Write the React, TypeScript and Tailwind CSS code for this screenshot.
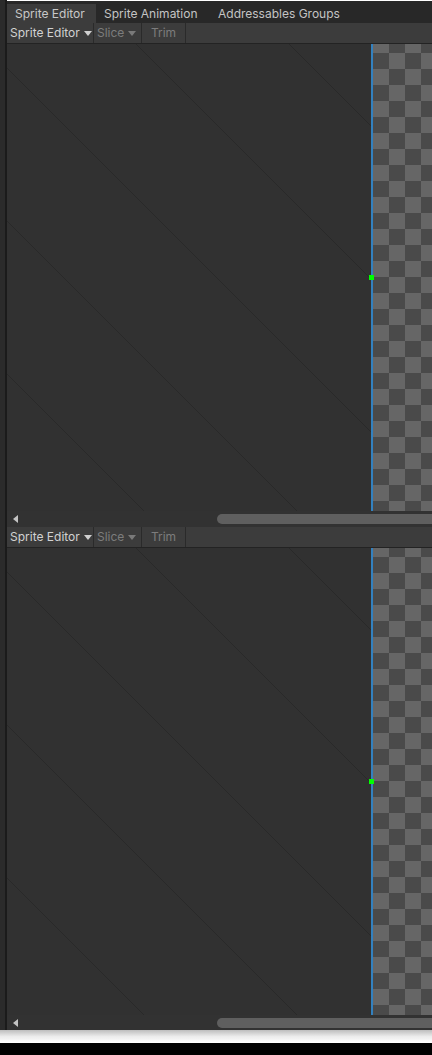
import React from "react";

// Two stacked Sprite Editor panels (Unity dark theme) in a narrow window.

const LINE_OFFSETS = [-282, -129, 24, 177, 330];
const CHECK_ROWS = Array.from({ length: 30 }, (_, i) => i);
const CHECK_COLS = [0, 1, 2, 3];

function Caret({ dim }: { dim?: boolean }) {
  return (
    <svg width="8" height="5" viewBox="0 0 8 5" className="ml-[4px]" aria-hidden>
      <path d="M0 0 L8 0 L4 5 Z" fill={dim ? "#7a7a7a" : "#d0d0d0"} />
    </svg>
  );
}

function Toolbar() {
  return (
    <div className="flex h-[21px] shrink-0 border-b border-[#232323] bg-[#3c3c3c] text-[12px] leading-none">
      <div className="flex w-[87px] items-center border-r border-[#2a2a2a] pl-[3px] text-[#d2d2d2]">
        Sprite Editor
        <Caret />
      </div>
      <div className="flex w-[48px] items-center border-r border-[#2a2a2a] pl-[3px] text-[#7c7c7c]">
        Slice
        <Caret dim />
      </div>
      <div className="flex w-[44px] items-center justify-center border-r border-[#2a2a2a] text-[#7c7c7c]">
        Trim
      </div>
      <div className="flex-1" />
    </div>
  );
}

// transparency checkerboard, 16px cells, top row cut by 7px
function Checker() {
  return (
    <div className="flex-1 overflow-hidden">
      <div className="mt-[-7px] grid w-[64px] grid-cols-4">
        {CHECK_ROWS.map((r) =>
          CHECK_COLS.map((c) => (
            <div
              key={`${r}-${c}`}
              className={`h-[16px] w-[16px] ${(r + c) % 2 === 0 ? "bg-[#666666]" : "bg-[#4a4a4a]"}`}
            />
          )),
        )}
      </div>
    </div>
  );
}

function Canvas() {
  return (
    <div className="relative flex h-[467px] shrink-0">
      <div className="w-[364px] shrink-0 bg-[#313131]">
        <svg width="364" height="467" viewBox="0 0 364 467" aria-hidden>
          {LINE_OFFSETS.map((c) => (
            <line key={c} x1={0} y1={c} x2={600} y2={600 + c} stroke="#292929" strokeWidth={1} />
          ))}
        </svg>
      </div>
      <div className="w-[2px] shrink-0 bg-[#3381bf]" />
      <Checker />
      {/* pivot handle */}
      <div className="absolute left-[362px] top-[231px] h-[5px] w-[5px] bg-[#00ff00]" />
    </div>
  );
}

function Scrollbar({ h }: { h: string }) {
  return (
    <div className={`flex shrink-0 items-center bg-[#323232] ${h}`}>
      <svg width="5" height="8" viewBox="0 0 5 8" className="ml-[6px]" aria-hidden>
        <path d="M5 0 L5 8 L0 4 Z" fill="#c4c4c4" />
      </svg>
      <div className="ml-[199px] h-[10px] flex-1 rounded-l-full bg-[#5f5f5f]" />
    </div>
  );
}

function Panel({ last }: { last?: boolean }) {
  return (
    <div className="flex flex-col">
      <Toolbar />
      <Canvas />
      <Scrollbar h={last ? "h-[15px]" : "h-[16px]"} />
    </div>
  );
}

export default function App() {
  return (
    <div className="flex h-[1055px] w-[432px] flex-col overflow-hidden bg-black font-['Inter','Liberation_Sans',sans-serif]">
      <div className="flex h-[1030px] shrink-0">
        <div className="w-[5px] bg-[#2b2b2b]" />
        <div className="w-[2px] bg-[#1b1b1b]" />
        <div className="flex min-w-0 flex-1 flex-col bg-[#282828]">
          <div className="h-[1px] shrink-0 bg-white" />
          <div className="flex h-[22px] shrink-0 items-end text-[12px] leading-none">
            <div className="flex h-[19px] w-[89px] items-center bg-[#3c3c3c] pl-[8px] pt-[1px] text-[#c8c8c8]">
              Sprite Editor
            </div>
            <div className="flex h-[19px] w-[114px] items-center pl-[8px] pt-[1px] text-[#c4c4c4]">
              Sprite Animation
            </div>
            <div className="flex h-[19px] items-center pl-[8px] pt-[1px] text-[#c4c4c4]">
              Addressables Groups
            </div>
          </div>
          <Panel />
          <Panel last />
        </div>
      </div>
      <div className="h-[13px] shrink-0 bg-linear-to-b from-[#bdbdbd] via-[#ececec] to-white" />
    </div>
  );
}
